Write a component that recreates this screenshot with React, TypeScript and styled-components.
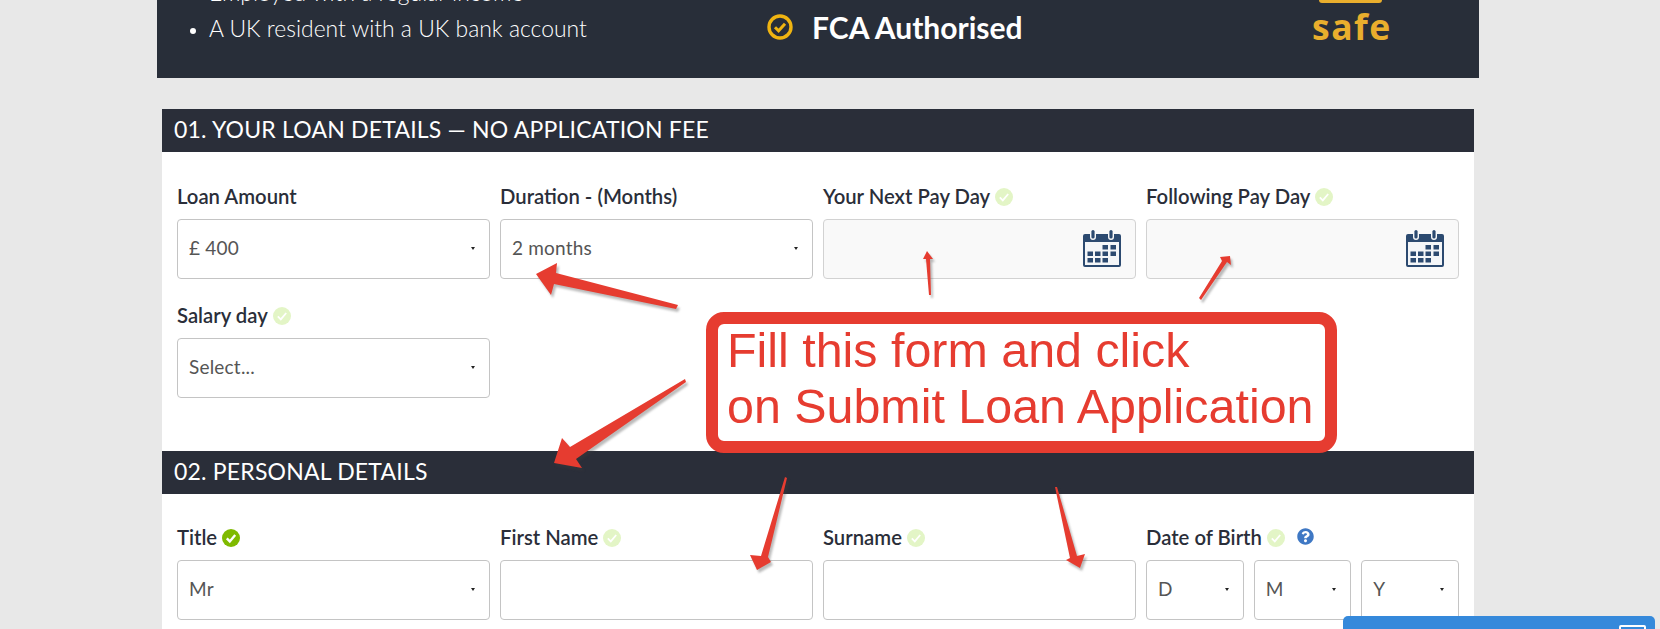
import React from 'react';
import styled, { createGlobalStyle } from 'styled-components';
import { FaQuestionCircle } from 'react-icons/fa';

const GlobalStyle = createGlobalStyle`
  html, body {
    margin: 0;
    height: 100%;
    overflow: hidden;
    background: #e8e8e8;
  }
  body {
    font-family: Lato, "Open Sans", sans-serif;
    color: #2a2e39;
  }
  * {
    box-sizing: border-box;
  }
`;

const Page = styled.div`
  position: relative;
  width: 1660px;
  height: 629px;
  overflow: hidden;
  padding-left: 157px;
`;

const TopPanel = styled.div`
  width: 1322px;
  height: 78px;
  background: #282e39;
  color: #fff;
  display: flex;
  align-items: flex-end;
  overflow: hidden;
  margin-bottom: 31px;
`;

const Requirements = styled.ul`
  width: 585px;
  margin: 0 0 32px;
  padding: 0 0 0 52px;
  font-size: 22.9px;
  font-weight: 300;
  line-height: 36px;
  li::marker {
    font-size: 18px;
  }
`;

const Authorised = styled.div`
  width: 510px;
  height: 54px;
  padding-left: 25px;
  align-self: flex-start;
  display: flex;
  align-items: center;
  gap: 19px;
  font-size: 30px;
  font-weight: 700;
`;

const SafeLogo = styled.div`
  width: 120px;
  height: 78px;
  padding-left: 60px;
  color: #e9ae2d;
  font-family: "Open Sans", sans-serif;
  font-size: 35.5px;
  font-weight: 700;
  letter-spacing: 1.5px;
  line-height: 36px;
  white-space: nowrap;
`;

const SafeBar = styled.div`
  width: 63px;
  height: 3px;
  margin: 0 0 5px 7px;
  background: #e9ae2d;
  border-radius: 0 0 6px 6px;
`;

const Form = styled.div`
  width: 1312px;
  margin-left: 5px;
  background: #fff;
`;

const SectionHeader = styled.h2`
  margin: 0;
  height: 43px;
  padding-left: 12px;
  background: #2a2e39;
  color: #fff;
  font-size: 23px;
  font-weight: 400;
  line-height: 41px;
  letter-spacing: 0.2px;
`;

const FieldGrid = styled.div<{ $top: number; $bottom: number }>`
  display: grid;
  grid-template-columns: repeat(4, 313px);
  column-gap: 10px;
  row-gap: 24px;
  padding: ${p => p.$top}px 15px ${p => p.$bottom}px;
`;

const Field = styled.div`
  min-width: 0;
`;

const Label = styled.label`
  height: 26px;
  margin-bottom: 9px;
  display: flex;
  align-items: center;
  gap: 5px;
  font-size: 20.3px;
  font-weight: 600;
  line-height: 24px;
  color: #2a2e39;
  white-space: nowrap;
`;

const LabelText = styled.span`
  margin-bottom: 2px;
`;

const HelpIcon = styled(FaQuestionCircle)`
  margin: -4px 0 0 7px;
  font-size: 17px;
  color: #3f78c4;
`;

const SelectWrap = styled.div`
  position: relative;
  &::after {
    content: '';
    position: absolute;
    right: 15px;
    top: 28px;
    border-left: 2.5px solid transparent;
    border-right: 2.5px solid transparent;
    border-top: 3px solid #222;
  }
`;

const Select = styled.select`
  display: block;
  width: 100%;
  height: 60px;
  padding: 0 11px 3px;
  appearance: none;
  background: #fff;
  border: 1px solid #c4c4c4;
  border-radius: 4px;
  color: #555;
  font-family: Lato, sans-serif;
  font-size: 19px;
  font-weight: 400;
  letter-spacing: 0.2px;
`;

const TextInput = styled.input`
  display: block;
  width: 100%;
  height: 60px;
  padding: 0 12px;
  background: #fff;
  border: 1px solid #c4c4c4;
  border-radius: 4px;
`;

const DateBox = styled.div`
  height: 60px;
  padding: 10px 14px 0 0;
  display: flex;
  justify-content: flex-end;
  background: #f9f9f9;
  border: 1px solid #d2d2d2;
  border-radius: 4px;
`;

const DobRow = styled.div`
  display: grid;
  grid-template-columns: repeat(3, 1fr);
  gap: 10px;
`;

const Annotations = styled.svg`
  position: absolute;
  left: 0;
  top: 0;
  filter: drop-shadow(2px 3px 1px rgba(60, 60, 60, 0.35));
`;

const Callout = styled.div`
  position: absolute;
  left: 706px;
  top: 312px;
  width: 631px;
  height: 141px;
  padding-left: 9px;
  background: #fff;
  border: 12px solid #e63c30;
  border-radius: 18px;
  color: #e63c30;
  font-family: "Liberation Sans", Arial, sans-serif;
  font-size: 48.4px;
  line-height: 56px;
  white-space: nowrap;
`;

const CalloutText = styled.div`
  margin-top: -2px;
`;

const ChatBar = styled.div`
  position: absolute;
  left: 1343px;
  top: 616px;
  width: 312px;
  height: 13px;
  padding: 9px 0 0 276px;
  background: #3589db;
  border-radius: 5px 5px 0 0;
`;

const ChatIcon = styled.div`
  width: 27px;
  height: 14px;
  border: 2px solid #fff;
  border-radius: 2px;
`;

const CheckMark = ({ on }: { on?: boolean }) => (
  <svg width="18" height="18" viewBox="0 0 18 18">
    <circle cx="9" cy="9" r="9" fill={on ? '#7fba00' : '#e3f5c6'} />
    <path d="M4.8 9.4l3 3 5.4-6.4" fill="none" stroke="#fff" strokeWidth={on ? 2.4 : 1.8} />
  </svg>
);

const YellowTick = () => (
  <svg width="26" height="26" viewBox="0 0 26 26">
    <circle cx="13" cy="13" r="11" fill="none" stroke="#f0b411" strokeWidth="3.4" />
    <path d="M8 13.2l3.6 3.6 6.4-7" fill="none" stroke="#f0b411" strokeWidth="3" />
  </svg>
);

const calendarCells = [
  [19.5, 15], [27.5, 15],
  [4.5, 21.5], [12, 21.5], [19.5, 21.5], [27.5, 21.5],
  [4.5, 28], [12, 28], [19.5, 28],
];

const CalendarIcon = () => (
  <svg width="38" height="37" viewBox="0 0 38 37">
    <path d="M2 4h5v3a3 3 0 0 0 6 0V4h12v3a3 3 0 0 0 6 0V4h5a2 2 0 0 1 2 2v29a2 2 0 0 1-2 2H2a2 2 0 0 1-2-2V6a2 2 0 0 1 2-2z" fill="#2c4a70" />
    <rect x="8.4" y="0" width="3.2" height="8.5" rx="1.6" fill="#2c4a70" />
    <rect x="26.4" y="0" width="3.2" height="8.5" rx="1.6" fill="#2c4a70" />
    <rect x="2" y="12" width="34" height="23" fill="#f4f6f8" />
    {calendarCells.map(([x, y]) => (
      <rect key={`${x}-${y}`} x={x} y={y} width="5.5" height="4.5" fill="#2c4a70" />
    ))}
  </svg>
);

const Arrows = () => (
  <Annotations width="1660" height="629" viewBox="0 0 1660 629">
    <g fill="#e63c30">
      <polygon points="678,305 556,273 557,263 536,274 551,295 554,284 676,309" />
      <polygon points="929,295 926,259 923,259 927,251 933,259 930,259 931,295" />
      <polygon points="1199,298 1222,261 1220,257 1230,256 1231,265 1227,262 1201,300" />
      <polygon points="685,379 570,447 562,438 554,463 582,468 576,459 686,382" />
      <polygon points="785,477 761,556 750,555 757,570 771,562 768,557 787,478" />
      <polygon points="1055,487 1070,558 1066,560 1080,568 1085,554 1077,556 1057,487" />
    </g>
  </Annotations>
);

const App: React.FC = () => {
  return (
    <Page>
      <GlobalStyle />
      <TopPanel>
        <Requirements>
          <li>Employed with a regular income</li>
          <li>A UK resident with a UK bank account</li>
        </Requirements>
        <Authorised>
          <YellowTick />
          <span>FCA Authorised</span>
        </Authorised>
        <SafeLogo>
          <SafeBar />
          safe
        </SafeLogo>
      </TopPanel>
      <Form>
        <SectionHeader>01. YOUR LOAN DETAILS — NO APPLICATION FEE</SectionHeader>
        <FieldGrid $top={32} $bottom={53}>
          <Field>
            <Label><LabelText>Loan Amount</LabelText></Label>
            <SelectWrap>
              <Select defaultValue="400">
                <option value="400">£ 400</option>
              </Select>
            </SelectWrap>
          </Field>
          <Field>
            <Label><LabelText>Duration - (Months)</LabelText></Label>
            <SelectWrap>
              <Select defaultValue="2">
                <option value="2">2 months</option>
              </Select>
            </SelectWrap>
          </Field>
          <Field>
            <Label><LabelText>Your Next Pay Day</LabelText> <CheckMark /></Label>
            <DateBox><CalendarIcon /></DateBox>
          </Field>
          <Field>
            <Label><LabelText>Following Pay Day</LabelText> <CheckMark /></Label>
            <DateBox><CalendarIcon /></DateBox>
          </Field>
          <Field>
            <Label><LabelText>Salary day</LabelText> <CheckMark /></Label>
            <SelectWrap>
              <Select>
                <option>Select...</option>
              </Select>
            </SelectWrap>
          </Field>
        </FieldGrid>
        <SectionHeader>02. PERSONAL DETAILS</SectionHeader>
        <FieldGrid $top={31} $bottom={20}>
          <Field>
            <Label><LabelText>Title</LabelText> <CheckMark on /></Label>
            <SelectWrap>
              <Select>
                <option>Mr</option>
              </Select>
            </SelectWrap>
          </Field>
          <Field>
            <Label><LabelText>First Name</LabelText> <CheckMark /></Label>
            <TextInput />
          </Field>
          <Field>
            <Label><LabelText>Surname</LabelText> <CheckMark /></Label>
            <TextInput />
          </Field>
          <Field>
            <Label><LabelText>Date of Birth</LabelText> <CheckMark /><HelpIcon /></Label>
            <DobRow>
              {['D', 'M', 'Y'].map(part => (
                <SelectWrap key={part}>
                  <Select>
                    <option>{part}</option>
                  </Select>
                </SelectWrap>
              ))}
            </DobRow>
          </Field>
        </FieldGrid>
      </Form>
      <Arrows />
      <Callout>
        <CalloutText>
          Fill this form and click
          <br />
          on Submit Loan Application
        </CalloutText>
      </Callout>
      <ChatBar>
        <ChatIcon />
      </ChatBar>
    </Page>
  );
};

export default App;
